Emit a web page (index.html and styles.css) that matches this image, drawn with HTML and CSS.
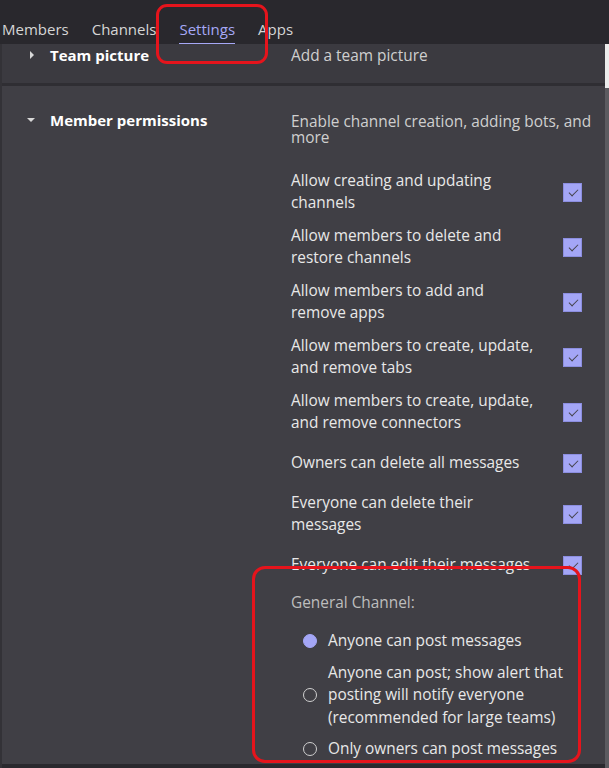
FILE: index.html
```html
<!DOCTYPE html>
<html lang="en">
<head>
<meta charset="utf-8">
<title>Team settings</title>
<link rel="stylesheet" href="styles.css">
</head>
<body>
<nav class="tabs">
  <span class="tab">Members</span>
  <span class="tab">Channels</span>
  <span class="tab active">Settings</span>
  <span class="tab">Apps</span>
</nav>
<div class="frame">
  <main class="content">
    <section class="row team">
      <div class="head"><span class="caret right"></span><span class="title">Team picture</span></div>
      <div class="desc">Add a team picture</div>
    </section>
    <section class="row perms">
      <div class="head"><span class="caret down"></span><span class="title">Member permissions</span></div>
      <div class="body">
        <p class="desc">Enable channel creation, adding bots, and more</p>
        <ul class="checks">
          <li><span class="label">Allow creating and updating channels</span><span class="box"></span></li>
          <li><span class="label">Allow members to delete and restore channels</span><span class="box"></span></li>
          <li><span class="label">Allow members to add and remove apps</span><span class="box"></span></li>
          <li><span class="label">Allow members to create, update, and remove tabs</span><span class="box"></span></li>
          <li><span class="label">Allow members to create, update, and remove connectors</span><span class="box"></span></li>
          <li class="single"><span class="label">Owners can delete all messages</span><span class="box"></span></li>
          <li><span class="label">Everyone can delete their messages</span><span class="box"></span></li>
          <li class="single"><span class="label">Everyone can edit their messages</span><span class="box"></span></li>
        </ul>
        <p class="group">General Channel:</p>
        <ul class="radios">
          <li><span class="radio on"></span><span class="rlabel">Anyone can post messages</span></li>
          <li><span class="radio"></span><span class="rlabel">Anyone can post; show alert that posting will notify everyone (recommended for large teams)</span></li>
          <li><span class="radio"></span><span class="rlabel">Only owners can post messages</span></li>
        </ul>
      </div>
    </section>
  </main>
  <div class="scrollbar"><span class="thumb"></span><span class="track"></span></div>
</div>
<div class="mark mark-tab"></div>
<div class="mark mark-general"></div>
</body>
</html>
```
FILE: styles.css
```css
* { box-sizing: border-box; }
html, body { margin: 0; padding: 0; }
body {
  width: 609px;
  height: 768px;
  overflow: hidden;
  background: #29282d;
  font-family: "Open Sans", "Noto Sans", sans-serif;
  font-size: 15.4px;
  color: #e6e6e6;
  position: relative;
}
.tabs {
  height: 44px;
  display: flex;
  align-items: flex-start;
  padding: 18px 0 0 2px;
  gap: 23px;
}
.tab {
  font-size: 15px;
  line-height: 22px;
  color: #d6d6d6;
  padding-bottom: 3px;
  border-bottom: 3px solid transparent;
}
.tab.active {
  color: #a6a8f6;
  border-bottom-color: #a6a8f6;
}
.frame {
  display: flex;
  height: 724px;
}
.content {
  width: 605px;
  display: flex;
  flex-direction: column;
  border-left: 2px solid #333237;
}
.row {
  display: grid;
  grid-template-columns: 289px 1fr;
}
.team {
  height: 42px;
  background: #3b3a40;
  border-bottom: 3px solid #2f2e33;
}
.perms {
  flex: 1;
  background: #403f45;
  padding-top: 23px;
  border-bottom: 4px solid #2a292e;
}
.head {
  display: flex;
  align-items: center;
  height: 22px;
  padding-left: 25px;
}
.title {
  font-weight: 700;
  font-size: 15px;
  color: #ffffff;
  margin-left: 15px;
}
.caret { width: 8px; height: 8px; position: relative; }
.caret.right::before {
  content: "";
  position: absolute;
  left: 3px; top: 0;
  border-left: 4px solid #d8d8d8;
  border-top: 4px solid transparent;
  border-bottom: 4px solid transparent;
}
.caret.down::before {
  content: "";
  position: absolute;
  left: 0; top: 2px;
  border-top: 4px solid #d8d8d8;
  border-left: 4px solid transparent;
  border-right: 4px solid transparent;
}
.desc {
  margin: 0;
  color: #cfcfcf;
  line-height: 22px;
}
.team .desc { margin-top: 1px; }
.body .desc {
  line-height: 16px;
  padding-top: 5px;
  padding-right: 8px;
}
.checks, .radios {
  list-style: none;
  margin: 0;
  padding: 0;
}
.checks {
  margin-top: 24px;
  display: flex;
  flex-direction: column;
  gap: 11px;
  width: 291px;
}
.checks li {
  display: flex;
  align-items: center;
  justify-content: space-between;
  min-height: 36px;
}
.label {
  width: 245px;
  line-height: 22px;
  color: #e8e8e8;
}
.box {
  width: 19px;
  height: 19px;
  background: #a4a6f6;
  border: 1px solid #8c8ee0;
  position: relative;
  flex: none;
}
.box::after {
  content: "";
  position: absolute;
  left: 5px;
  top: 5px;
  width: 8px; height: 4px;
  border-left: 1.5px solid #45444c;
  border-bottom: 1.5px solid #45444c;
  transform: rotate(-45deg);
  transform-origin: center;
}
.group {
  margin: 9px 0 0;
  line-height: 22px;
  color: #bdbdbd;
}
.radios {
  margin-top: 16px;
  display: flex;
  flex-direction: column;
  gap: 9px;
}
.radios li {
  display: flex;
  align-items: center;
  padding-left: 12px;
}
.radio {
  width: 14px;
  height: 14px;
  border-radius: 50%;
  border: 1px solid #d0d0d0;
  flex: none;
}
.radio.on {
  background: #a4a6f6;
  border-color: #a4a6f6;
}
.rlabel {
  margin-left: 11px;
  width: 240px;
  line-height: 22.5px;
  color: #e8e8e8;
}
.scrollbar {
  width: 4px;
  display: flex;
  flex-direction: column;
}
.thumb { height: 44px; background: #ececec; }
.track { flex: 1; background: #5c5b60; }
.mark {
  position: absolute;
  border: 3px solid #e5141c;
  border-radius: 11px;
}
.mark-tab { left: 156px; top: 4px; width: 112px; height: 60px; }
.mark-general { left: 252px; top: 566px; width: 329px; height: 197px; border-radius: 13px; }
```
